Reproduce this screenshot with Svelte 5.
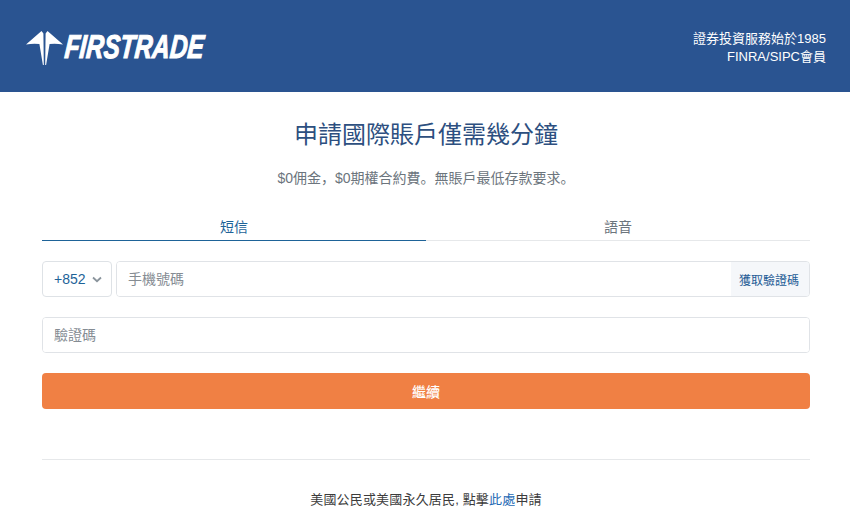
<script>
  let tab = $state('sms');
</script>

<div class="page">
  <header class="top">
    <div class="logo">
      <svg class="mark" width="37" height="36" viewBox="0 0 37 36">
        <path d="M0 14.5 L15.5 1 L17.4 3.5 L17.8 35 L16.9 35 L13.4 14 Q7 13.2 0 14.5 Z" fill="#fff"/>
        <path d="M37 14.5 L21.5 1 L19.6 3.5 L19.2 35 L20.1 35 L23.6 14 Q30 13.2 37 14.5 Z" fill="#fff"/>
      </svg>
      <span class="word"><span class="wordinner">FIRSTRADE</span></span>
    </div>
    <div class="slogan">
      <div>證券投資服務始於1985</div>
      <div>FINRA/SIPC會員</div>
    </div>
  </header>

  <main class="content">
    <h1>申請國際賬戶僅需幾分鐘</h1>
    <p class="sub">$0佣金，$0期權合約費。無賬戶最低存款要求。</p>

    <div class="tabs">
      <button class="tab" class:active={tab === 'sms'} onclick={() => (tab = 'sms')}>短信</button>
      <button class="tab" class:active={tab === 'voice'} onclick={() => (tab = 'voice')}>語音</button>
    </div>

    <div class="phone">
      <div class="code">
        <span>+852</span>
        <svg width="10" height="7" viewBox="0 0 10 7"><path d="M1 1.5 L5 5.2 L9 1.5" fill="none" stroke="#8a949c" stroke-width="1.8"/></svg>
      </div>
      <div class="field grow">
        <input placeholder="手機號碼" />
        <button class="getcode">獲取驗證碼</button>
      </div>
    </div>

    <div class="field single">
      <input placeholder="驗證碼" />
    </div>

    <button class="submit">繼續</button>

    <div class="rule"></div>

    <p class="foot">美國公民或美國永久居民, 點擊<a href="#here">此處</a>申請</p>
  </main>
</div>

<style>
  :global(body) {
    margin: 0;
    background: #fff;
    font-family: "Liberation Sans", "Noto Sans CJK SC", sans-serif;
  }
  .page {
    width: 850px;
    height: 529px;
    overflow: hidden;
  }
  .top {
    height: 92px;
    background: #2a5491;
    display: flex;
    align-items: center;
    justify-content: space-between;
    padding: 0 24px 0 26px;
    box-sizing: border-box;
    color: #fff;
  }
  .logo {
    display: flex;
    align-items: center;
    gap: 2px;
    padding-top: 2px;
  }
  .mark {
    display: block;
    margin-top: 1px;
  }
  .word {
    display: block;
    width: 140px;
    height: 34px;
    line-height: 34px;
  }
  .wordinner {
    display: inline-block;
    font-size: 33px;
    font-weight: 700;
    font-style: italic;
    color: #fff;
    -webkit-text-stroke: 1.1px #fff;
    transform: skewX(-5deg) scaleX(0.735);
    transform-origin: left center;
  }
  .slogan {
    text-align: right;
    font-size: 13px;
    line-height: 18px;
    padding-top: 4px;
  }
  .content {
    padding: 0 40px 0 42px;
    text-align: center;
  }
  h1 {
    margin: 27px 0 0;
    font-size: 24px;
    line-height: 32px;
    font-weight: 400;
    color: #2d4f80;
  }
  .sub {
    margin: 17px 0 0;
    font-size: 14px;
    line-height: 20px;
    color: #6c757d;
  }
  .tabs {
    display: flex;
    margin-top: 24px;
  }
  .tab {
    flex: 1;
    height: 29px;
    padding: 0;
    background: none;
    border: 0;
    border-bottom: 1px solid #e6e8ea;
    font: inherit;
    font-size: 14px;
    color: #6c757d;
  }
  .tab.active {
    color: #1e6398;
    border-bottom-color: #1e6398;
  }
  .phone {
    display: flex;
    gap: 4px;
    margin-top: 20px;
  }
  .code {
    width: 70px;
    height: 36px;
    box-sizing: border-box;
    border: 1px solid #dee2e6;
    border-radius: 4px;
    display: flex;
    align-items: center;
    padding-left: 11px;
    gap: 6px;
    font-size: 14px;
    color: #1e6398;
  }
  .field {
    display: flex;
    height: 36px;
    box-sizing: border-box;
    border: 1px solid #e0e3e7;
    border-radius: 4px;
    overflow: hidden;
  }
  .grow {
    flex: 1;
  }
  .single {
    margin-top: 20px;
  }
  input {
    flex: 1;
    min-width: 0;
    border: 0;
    outline: 0;
    padding: 0 11px;
    font: inherit;
    font-size: 14px;
    color: #495057;
    background: #fff;
  }
  input::placeholder {
    color: #858c93;
    opacity: 1;
  }
  .getcode {
    width: 78px;
    border: 0;
    padding: 0 2px 0 0;
    background: #f5f7fa;
    font: inherit;
    font-size: 12px;
    color: #1f5c96;
  }
  .submit {
    display: block;
    width: 100%;
    height: 36px;
    margin-top: 20px;
    border: 0;
    border-radius: 4px;
    background: #f08044;
    color: #fff;
    font: inherit;
    font-size: 14px;
    font-weight: 500;
  }
  .rule {
    height: 1px;
    margin-top: 50px;
    background: #e6e8ea;
  }
  .foot {
    margin: 30px 0 0;
    font-size: 13px;
    line-height: 20px;
    letter-spacing: 0.17px;
    color: #3c3c3c;
  }
  .foot a {
    color: #1f6bb5;
    text-decoration: none;
  }
</style>
